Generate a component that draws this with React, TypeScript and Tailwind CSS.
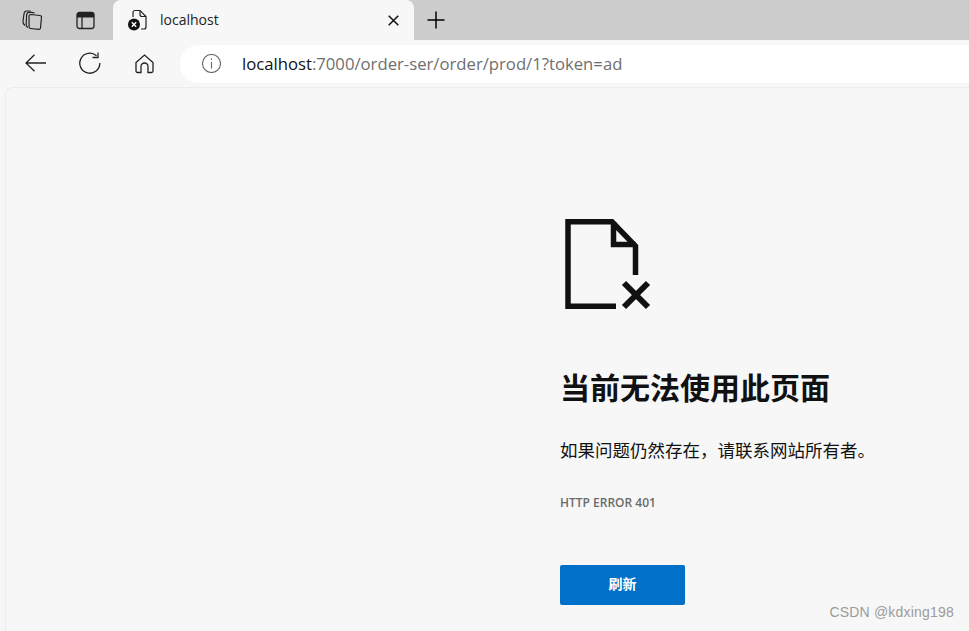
const cjk = "font-['Open_Sans','Noto_Sans_CJK_SC',sans-serif]";

function TabStrip() {
  return (
    <div className="flex h-10 bg-[#cccccc]">
      <div className="flex w-[113px] shrink-0 items-center pl-[22px] gap-[33px]">
        <svg width="21" height="21" viewBox="0 0 21 21" fill="none" stroke="#222" strokeWidth="1.2">
          <path d="M8.5 4.5 L18 5.5 a1.5 1.5 0 0 1 1.5 1.7 L18.5 18 a1.5 1.5 0 0 1-1.7 1.4 L8.5 18.5 a1.5 1.5 0 0 1-1.4-1.7 L7 6 a1.5 1.5 0 0 1 1.5-1.5z" />
          <path d="M12.5 2.8 L7.5 2.2 C5.5 2.2 5 3 4.6 5 L4.2 14.5 C4.2 16 4.8 17 6 17.5" />
          <path d="M8.5 1 L4.5 1 C3 1.2 2.2 2 2 4 L1 11 C0.8 13 1.5 14.5 3 15.5" />
        </svg>
        <svg width="19" height="19" viewBox="0 0 19 19" fill="none">
          <rect x="1" y="1.5" width="17" height="16" rx="2.5" stroke="#222" strokeWidth="1.3" />
          <path d="M1 4 a2.5 2.5 0 0 1 2.5 -2.5 h12 a2.5 2.5 0 0 1 2.5 2.5 v2.5 h-17z" fill="#222" />
          <path d="M6 6 v11" stroke="#222" strokeWidth="1.3" />
        </svg>
      </div>
      <div className="flex w-[301px] shrink-0 items-center rounded-t-lg bg-[#f7f7f7] pl-[15px] pr-[15px]">
        <svg width="20" height="22" viewBox="0 0 20 22" fill="none">
          <path d="M5 8 V3.5 a2 2 0 0 1 2-2 h5 l6 6 v10.5 a2 2 0 0 1-2 2 h-3" stroke="#222" strokeWidth="1.2" />
          <path d="M12 1.5 v4 a2 2 0 0 0 2 2 h4" stroke="#222" strokeWidth="1.2" />
          <circle cx="6" cy="15.5" r="6" fill="#111" />
          <path d="M3.8 13.3 l4.4 4.4 M8.2 13.3 l-4.4 4.4" stroke="#fff" strokeWidth="1.4" />
        </svg>
        <span className="ml-[12px] mb-[2px] flex-1 font-['Open_Sans',sans-serif] text-[14px] text-[#222]">localhost</span>
        <svg width="11" height="11" viewBox="0 0 11 11" stroke="#111" strokeWidth="1.5">
          <path d="M0.7 0.7 L10.3 10.3 M10.3 0.7 L0.7 10.3" />
        </svg>
      </div>
      <div className="flex items-center pl-[13px]">
        <svg width="18" height="18" viewBox="0 0 18 18" stroke="#000" strokeWidth="1.5">
          <path d="M9 0.5 V17.5 M0.5 9 H17.5" />
        </svg>
      </div>
    </div>
  );
}

function Toolbar() {
  return (
    <div className="flex h-[47px] items-center bg-[#f7f7f7]">
      <div className="flex w-[180px] shrink-0 items-center pl-[25px]">
        <svg className="mb-[1px]" width="21" height="18" viewBox="0 0 21 18" fill="none" stroke="#222" strokeWidth="1.3">
          <path d="M21 9 H1 M9.5 0.8 L1 9 L9.5 17.2" />
        </svg>
        <svg className="ml-[33px] mb-[1px]" width="22" height="22" viewBox="0 0 22 22" fill="none" stroke="#222" strokeWidth="1.3">
          <path d="M17.5 3.8 A10 10 0 1 0 20.8 11" />
          <path d="M19 0.5 V5.5 H13.5" />
        </svg>
        <svg className="ml-[34px]" width="19" height="20" viewBox="0 0 19 20" fill="none" stroke="#222" strokeWidth="1.3">
          <path d="M1 8.5 L9.5 1 L18 8.5 V17 a1.5 1.5 0 0 1-1.5 1.5 h-3.5 v-6 a3.5 3.5 0 0 0-7 0 v6 h-3.5 a1.5 1.5 0 0 1-1.5-1.5z" />
        </svg>
      </div>
      <div className="flex h-[38px] flex-1 items-center rounded-l-[19px] bg-white pl-[22px]">
        <svg width="19" height="19" viewBox="0 0 19 19" fill="none" stroke="#666" strokeWidth="1.1">
          <circle cx="9.5" cy="9.5" r="9" />
          <path d="M9.5 8 V14.5 M9.5 4.5 V6" />
        </svg>
        <span className="ml-[21px] font-['Open_Sans',sans-serif] text-[16.7px] text-[#6f6f6f]">
          <span className="text-[#111]">localhost</span>:7000/order-ser/order/prod/1?token=ad
        </span>
      </div>
    </div>
  );
}

function ErrorPage() {
  return (
    <div className="flex-1 pl-[5px] bg-[#f7f7f7]">
      <div className="h-full rounded-tl-lg border-l border-t border-[#ececec] bg-[#f7f7f7] pl-[554px] pt-[131px]">
        <svg className="ml-[5px]" width="86" height="91" viewBox="0 0 86 91" fill="none" stroke="#111" strokeWidth="5.5">
          <path d="M51 87.3 H3 V2.8 H47 L70.5 27 V56" />
          <path d="M48.5 3 V25.5 H70.5" />
          <path d="M59 64 L83 88 M83 64 L59 88" strokeWidth="6" />
        </svg>
        <h1 className={`mt-[58px] whitespace-nowrap text-[30px] font-bold leading-[40px] text-[#111] ${cjk}`}>当前无法使用此页面</h1>
        <p className={`mt-[29px] whitespace-nowrap text-[17.5px] leading-[26px] text-[#111] ${cjk}`}>如果问题仍然存在，请联系网站所有者。</p>
        <p className="mt-[32px] font-['Open_Sans',sans-serif] text-[12px] font-semibold leading-[16px] text-[#6b6b6b]">HTTP ERROR 401</p>
        <button className={`mt-[54px] h-10 w-[125px] rounded-[2px] bg-[#0070c8] pb-[3px] text-[14px] font-bold text-white ${cjk}`}>刷新</button>
      </div>
    </div>
  );
}

export default function App() {
  return (
    <div className="relative flex h-[631px] w-[969px] flex-col overflow-hidden bg-[#f7f7f7]">
      <TabStrip />
      <Toolbar />
      <ErrorPage />
      <span className="absolute bottom-[8px] right-[15px] font-['Liberation_Sans',sans-serif] text-[14px] tracking-[0.2px] text-[#9b9b9b]">CSDN @kdxing198</span>
    </div>
  );
}
